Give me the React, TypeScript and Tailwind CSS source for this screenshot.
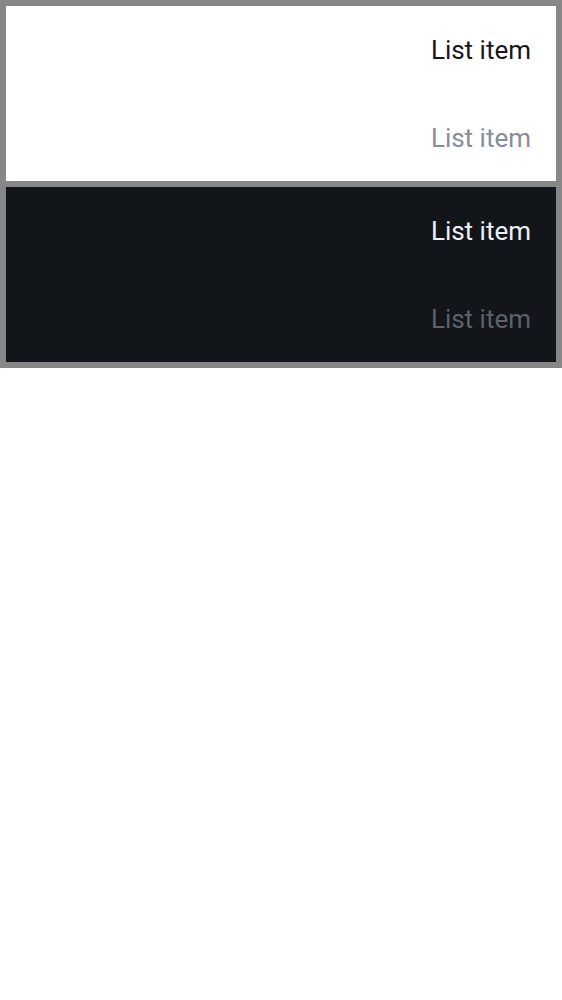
const items = [
  { label: "List item", muted: false },
  { label: "List item", muted: true },
];

function Panel({ dark }: { dark: boolean }) {
  return (
    <div className={dark ? "bg-[#12151a]" : "bg-white"}>
      {items.map((item, i) => (
        <div
          key={i}
          className={`flex h-[87.5px] items-center justify-end pt-[2px] pr-[25px] text-[26px] ${
            dark
              ? item.muted
                ? "text-[#5c616b]"
                : "text-[#eef0f3]"
              : item.muted
                ? "text-[#878d99]"
                : "text-[#16181c]"
          }`}
        >
          {item.label}
        </div>
      ))}
    </div>
  );
}

export default function App() {
  return (
    <div
      className="flex flex-col gap-[6px] bg-[#878787] p-[6px]"
      style={{ fontFamily: "Roboto, 'Liberation Sans', sans-serif" }}
    >
      <Panel dark={false} />
      <Panel dark />
    </div>
  );
}
